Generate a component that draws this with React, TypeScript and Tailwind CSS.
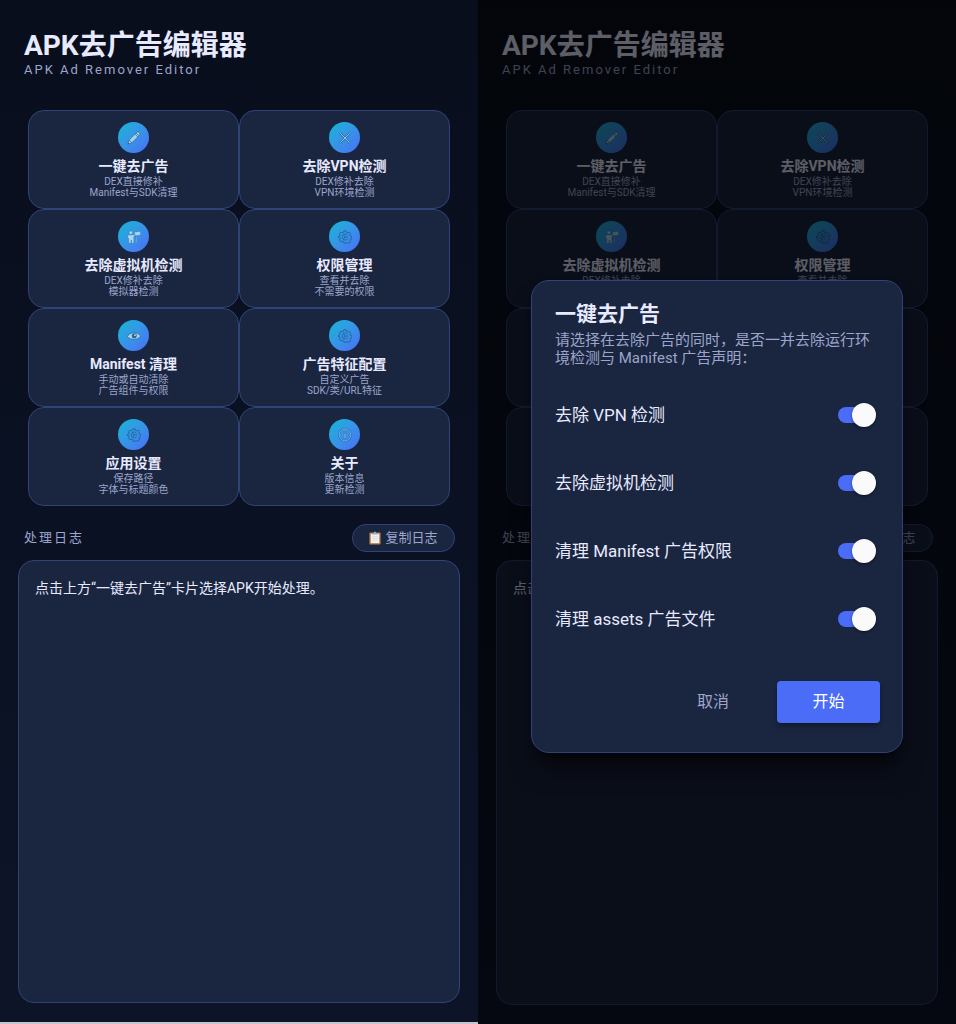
import React, { useState } from 'react';

type IconName = 'pencil' | 'cross' | 'teacher' | 'gear' | 'eye' | 'info';

const features: { icon: IconName; title: string; lines: [string, string] }[] = [
  { icon: 'pencil', title: '一键去广告', lines: ['DEX直接修补', 'Manifest与SDK清理'] },
  { icon: 'cross', title: '去除VPN检测', lines: ['DEX修补去除', 'VPN环境检测'] },
  { icon: 'teacher', title: '去除虚拟机检测', lines: ['DEX修补去除', '模拟器检测'] },
  { icon: 'gear', title: '权限管理', lines: ['查看并去除', '不需要的权限'] },
  { icon: 'eye', title: 'Manifest 清理', lines: ['手动或自动清除', '广告组件与权限'] },
  { icon: 'gear', title: '广告特征配置', lines: ['自定义广告', 'SDK/类/URL特征'] },
  { icon: 'gear', title: '应用设置', lines: ['保存路径', '字体与标题颜色'] },
  { icon: 'info', title: '关于', lines: ['版本信息', '更新检测'] },
];

const options = ['去除 VPN 检测', '去除虚拟机检测', '清理 Manifest 广告权限', '清理 assets 广告文件'];

const FeatureIcon = ({ name }: { name: IconName }) => (
  <svg viewBox="0 0 16 16" className="w-[14px] h-[14px]" fill="none" aria-hidden="true">
    {name === 'pencil' && (
      <>
        <path d="M.8 15.2l1.7-4.8 8.4-8.4c1-1 2.3-1.1 3.2-.2s.8 2.2-.2 3.2l-8.4 8.4z" fill="#a9d3ef" stroke="#2d6e9c" strokeWidth=".8" />
        <path d="M2.6 10.4l3 3M9.3 3.7l3 3M10.6 2.4l3 3" stroke="#2d6187" strokeWidth=".9" />
        <path d="M.8 15.2l.8-2.2 1.4 1.4z" fill="#2d6187" />
      </>
    )}
    {name === 'cross' && (
      <>
        <path d="M3 3l10 10M13 3L3 13" stroke="#2b74b4" strokeWidth="2.6" strokeLinecap="round" />
        <path d="M3 3l10 10M13 3L3 13" stroke="#93c8ec" strokeWidth="1.1" strokeLinecap="round" />
      </>
    )}
    {name === 'teacher' && (
      <g fill="#a9d6f2" stroke="#2d6e9c" strokeWidth=".4">
        <circle cx="4.4" cy="3" r="2" />
        <path d="M.9 5.6h6.6l2-1.3.9 1.2-2.6 2v7.7H5.3v-3.6h-.8v3.6H2V9.8l-1.1-.9z" />
        <path d="M8.8 1.6l2 .6 4.6-.8v4.4l-4 .7-2.6-.7z" />
        <path d="M10.3 7l-.4 7.6h1.2V7z" />
      </g>
    )}
    {name === 'gear' && (
      <g stroke="#24649c">
        <path
          d="M6.7 1h2.6l.5 1.9 1.2.5 1.6-.9 1.8 1.8-.8 1.7.5 1.1 1.9.6v2.3l-1.9.6-.5 1.2.9 1.7-1.9 1.8-1.6-.9-1.2.5L9.3 15H6.7l-.5-1.9-1.2-.5-1.7.9-1.7-1.8.9-1.7-.5-1.2L0 8.3V7.6L2 6.9l.5-1.1-.9-1.7 1.8-1.6 1.6.9 1.2-.5z"
          strokeWidth="1.1"
          strokeLinejoin="round"
        />
        <path d="M11 6.2a3.4 3.4 0 1 0 0 3.6M8 8h3.6M8 8L6.2 5M8 8l-1.8 3" strokeWidth="1" />
      </g>
    )}
    {name === 'eye' && (
      <>
        <path d="M.3 8.6C3.8 3 11.2 2.6 15.7 8c-3.4 4.8-11 5.2-15.4.6z" fill="#a9d6f2" stroke="#2b6b9c" strokeWidth=".9" />
        <circle cx="8.3" cy="7.8" r="2.9" fill="#28679a" />
        <circle cx="9.1" cy="7" r="1" fill="#b9dff6" />
      </>
    )}
    {name === 'info' && (
      <>
        <circle cx="8" cy="8" r="6.8" stroke="#2b6fb0" strokeWidth="2.1" />
        <circle cx="8" cy="8" r="6.6" stroke="#8cc0ec" strokeWidth=".8" />
        <path d="M8 6.7v5M8 3.8v1.6" stroke="#2b69a5" strokeWidth="2.6" />
        <path d="M8 6.9v4.6M8 4v1.2" stroke="#9bcbf0" strokeWidth="1.2" />
      </>
    )}
  </svg>
);

const ClipboardIcon = () => (
  <svg viewBox="0 0 14 16" className="w-3 h-[14px]" aria-hidden="true">
    <rect x=".5" y="1.5" width="13" height="14" rx="1" fill="#bd7b42" />
    <rect x="2" y="3" width="10" height="11" fill="#f1f2f4" />
    <path d="M3.5 6.5h7M3.5 8.5h7M3.5 10.5h7" stroke="#cdd3dc" strokeWidth=".7" />
    <path d="M3.5 3.8V2.2h2L6 .8h2l.5 1.4h2v1.6z" fill="#8fb0bd" />
  </svg>
);

const MainScreen = () => (
  <div className="flex flex-1 flex-col bg-linear-to-b from-[#080e1c] to-[#0d1428] pb-[19px]">
    <header className="px-6 pt-[30px]">
      <h1 className="text-[28px] leading-8 font-bold text-[#e8eaff]">APK去广告编辑器</h1>
      <p className="text-[13px] leading-4 tracking-[2px] text-[#9da5cb]">APK Ad Remover Editor</p>
    </header>

    <div className="grid grid-cols-2 px-7 pt-8">
      {features.map((feature) => (
        <button
          key={feature.title}
          type="button"
          className="flex h-[99px] flex-col items-center rounded-2xl border border-[#2f4377] bg-[#1a2540] pt-[11px]"
        >
          <span className="flex h-[31px] w-[31px] items-center justify-center rounded-full bg-linear-to-br from-[#06b6d4] to-[#4a6cf7]">
            <FeatureIcon name={feature.icon} />
          </span>
          <span className="mt-[3px] text-sm leading-5 font-bold text-[#e8eaff]">{feature.title}</span>
          <span className="text-[10px] leading-[11px] text-[#9da5cb]">
            {feature.lines[0]}
            <br />
            {feature.lines[1]}
          </span>
        </button>
      ))}
    </div>

    <div className="flex items-center justify-between pt-[18px] pr-[23px] pl-6">
      <h2 className="text-[13px] leading-5 tracking-[2px] text-[#9da5cb]">处理日志</h2>
      <button
        type="button"
        className="flex h-7 w-[103px] items-center justify-center gap-1 rounded-full border border-[#2f4377] bg-[#1a2540] text-[13px] text-[#9da5cb]"
      >
        <ClipboardIcon />
        复制日志
      </button>
    </div>

    <div className="mx-[18px] mt-2 flex-1 rounded-2xl border border-[#2f4377] bg-[#1a2540] px-4 py-4">
      <p className="text-sm leading-[22px] text-[#e8eaff]">点击上方“一键去广告”卡片选择APK开始处理。</p>
    </div>
  </div>
);

const OptionSwitch = ({ label }: { label: string }) => {
  const [checked, setChecked] = useState(true);

  return (
    <label className="flex h-[68px] cursor-pointer items-center justify-between">
      <span className="text-[17px] leading-6 text-[#e8eaff]">{label}</span>
      <input
        type="checkbox"
        role="switch"
        checked={checked}
        onChange={(e) => setChecked(e.target.checked)}
        className="peer sr-only"
      />
      <span className="mr-1 flex h-4 w-[38px] items-center justify-start rounded-full bg-[#3a4566] peer-checked:justify-end peer-checked:bg-[#4a6cf7]">
        <span className="h-6 w-6 rounded-full bg-[#fafafa] shadow-sm shadow-black/40"></span>
      </span>
    </label>
  );
};

const RemoveAdsDialog = () => (
  <div
    role="dialog"
    aria-modal="true"
    aria-labelledby="dialog-title"
    className="mx-[53px] w-full rounded-[18px] border border-[#2f4377] bg-[#1a2540] pt-5 pr-[22px] pb-[29px] pl-[23px] shadow-xl shadow-black/50"
  >
    <h2 id="dialog-title" className="text-[21px] leading-[26px] font-bold text-[#e8eaff]">一键去广告</h2>
    <p className="mt-1 text-[15px] leading-[18px] text-[#9da5cb]">
      请选择在去除广告的同时，是否一并去除运行环境检测与 Manifest 广告声明：
    </p>
    <div className="mt-[14px]">
      {options.map((label) => (
        <OptionSwitch key={label} label={label} />
      ))}
    </div>
    <div className="mt-7 flex items-center justify-end gap-3">
      <button type="button" className="h-[42px] px-9 text-base text-[#9da5cb]">取消</button>
      <button type="button" className="h-[42px] w-[103px] rounded bg-[#4a6cf7] text-base text-white shadow-md shadow-black/30">
        开始
      </button>
    </div>
  </div>
);

export default function App() {
  return (
    <main className="grid min-h-screen grid-cols-2 bg-[#03060c] font-[Roboto,'Noto_Sans_CJK_SC',sans-serif]">
      <section className="flex flex-col border-b-2 border-[#c4c6cb]">
        <MainScreen />
      </section>

      <section className="relative flex flex-col">
        <div className="flex flex-1 flex-col" inert>
          <MainScreen />
        </div>
        <div className="absolute inset-0 flex items-center justify-center bg-black/60 pt-2">
          <RemoveAdsDialog />
        </div>
      </section>
    </main>
  );
}
